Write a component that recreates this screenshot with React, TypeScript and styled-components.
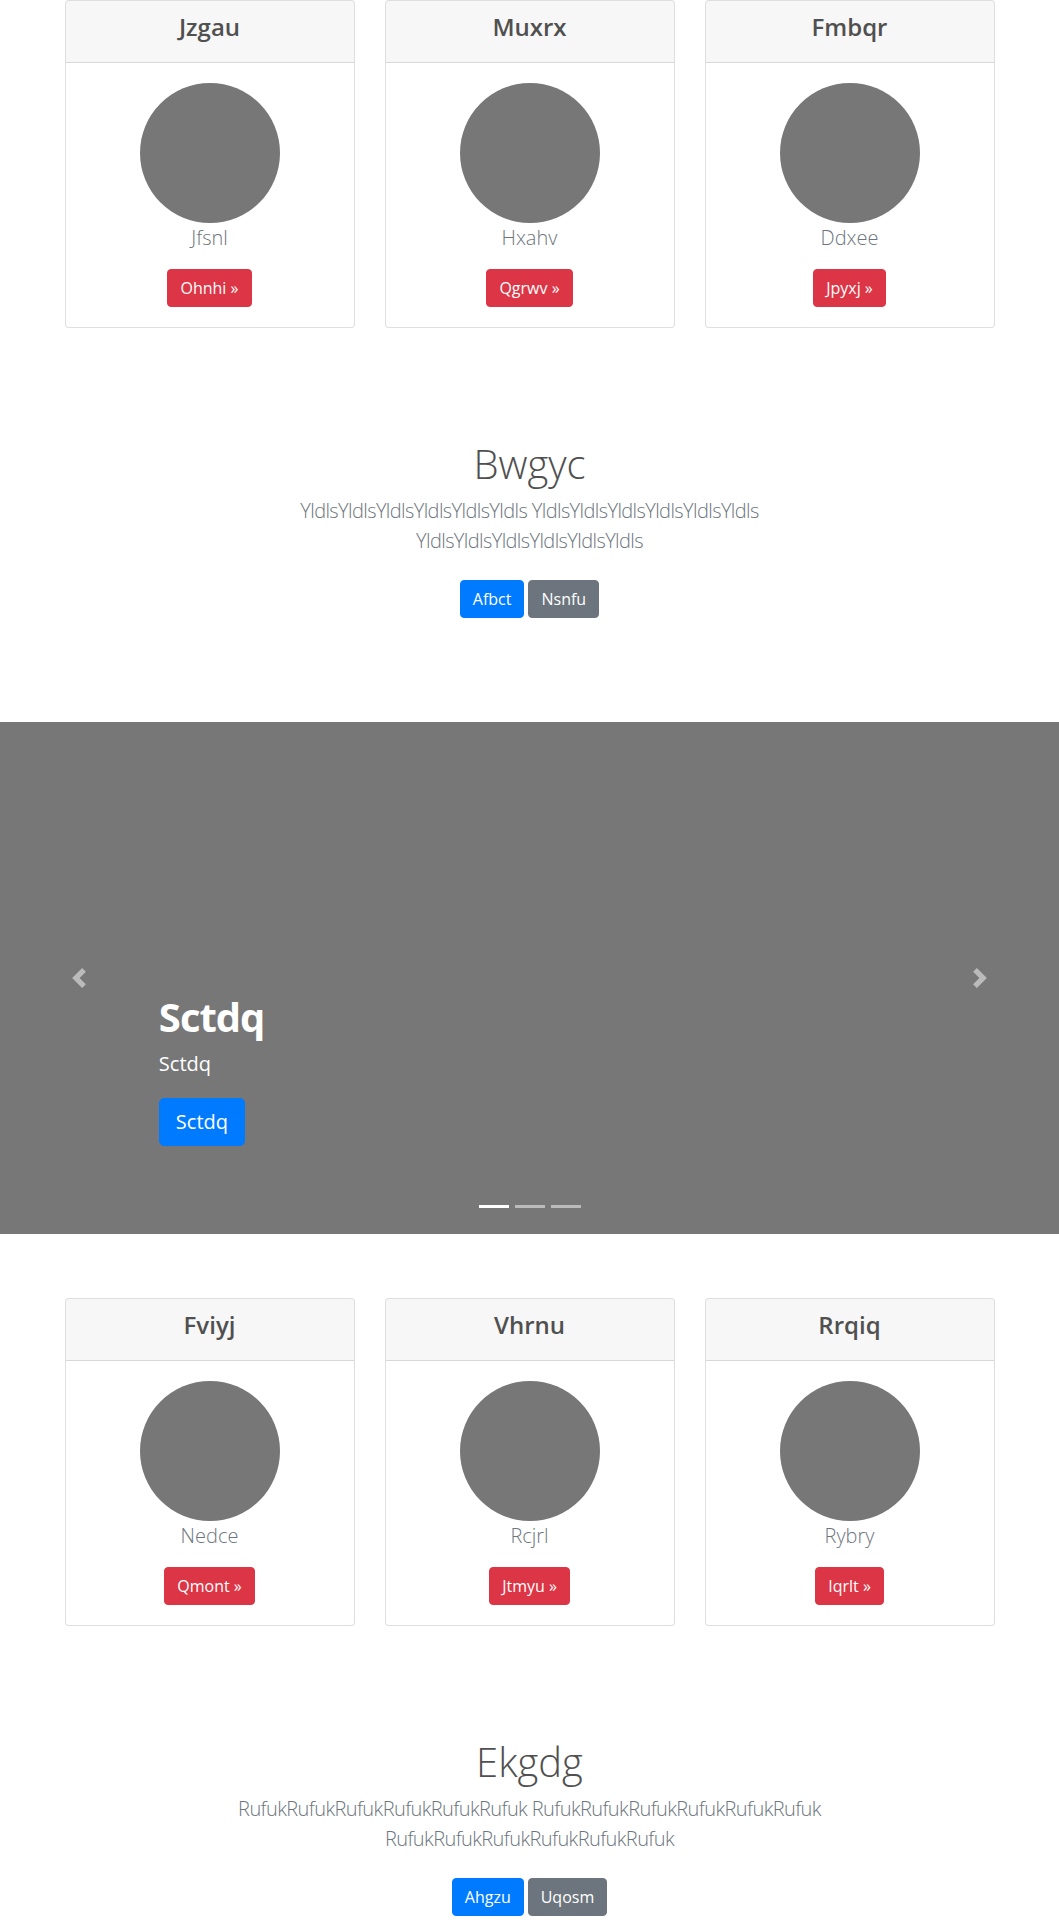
import React from "react";
import styled, { createGlobalStyle, css } from "styled-components";

const FONT = `"Open Sans", "Noto Sans", "Liberation Sans", Arial, sans-serif`;

const GlobalStyle = createGlobalStyle`
  html, body { margin: 0; padding: 0; background: #fff; }
  body {
    font-family: ${FONT};
    font-size: 16px;
    line-height: 1.5;
    color: #212529;
  }
  *, *::before, *::after { box-sizing: border-box; }
`;

const Container = styled.div`
  width: 960px;
  max-width: 100%;
  margin: 0 auto;
  padding: 0 15px;
`;

const CardGrid = styled.div`
  display: grid;
  grid-template-columns: repeat(3, 1fr);
  column-gap: 30px;
`;

const Card = styled.div`
  display: flex;
  flex-direction: column;
  background: #fff;
  border: 1px solid rgba(0, 0, 0, 0.125);
  border-radius: 4px;
  overflow: hidden;
`;

const CardHeader = styled.div`
  background: rgba(0, 0, 0, 0.03);
  border-bottom: 1px solid rgba(0, 0, 0, 0.125);
  padding: 12px 20px;
  text-align: center;
`;

const CardTitle = styled.h4`
  margin: 0 0 8px;
  font-size: 24px;
  line-height: 28.8px;
  font-weight: 600;
  color: #505050;
`;

const CardBody = styled.div`
  padding: 20px;
  display: flex;
  flex-direction: column;
  align-items: center;
`;

const Avatar = styled.div`
  width: 140px;
  height: 140px;
  border-radius: 50%;
  background: #777;
`;

const Lead = styled.p`
  margin: 0 0 16px;
  font-size: 20px;
  line-height: 30px;
  font-weight: 300;
  color: #6c757d;
`;

const variants = {
  primary: "#007bff",
  secondary: "#6c757d",
  danger: "#dc3545",
};

const Button = styled.a<{ $variant: keyof typeof variants; $large?: boolean }>`
  display: inline-block;
  padding: 6px 12px;
  font-size: 16px;
  line-height: 24px;
  font-weight: 400;
  color: #fff;
  text-decoration: none;
  border-radius: 4px;
  border: 1px solid ${(p) => variants[p.$variant]};
  background: ${(p) => variants[p.$variant]};
  white-space: nowrap;
  cursor: pointer;
  ${(p) =>
    p.$large &&
    css`
      padding: 8px 16px;
      font-size: 20px;
      line-height: 30px;
      border-radius: 5px;
    `}
`;

const Hero = styled.section`
  padding: 112px 0 104px;
  text-align: center;
`;

const HeroTitle = styled.h1`
  margin: 0 0 8px;
  font-size: 40px;
  line-height: 48px;
  font-weight: 300;
  color: #505050;
`;

const HeroLead = styled(Lead)`
  max-width: 610px;
  margin: 0 auto 16px;
  letter-spacing: -0.03em;
`;

const ButtonRow = styled.div`
  display: flex;
  justify-content: center;
  gap: 4px;
  padding-top: 8px;
`;

const Carousel = styled.div`
  position: relative;
  height: 512px;
  background: #777;
  margin-bottom: 64px;
  overflow: hidden;
`;

const Caption = styled.div`
  position: absolute;
  left: 15%;
  right: 15%;
  bottom: 88px;
  color: #fff;
  text-align: left;
  z-index: 2;
`;

const CaptionTitle = styled.h1`
  margin: 0 0 8px;
  font-size: 40px;
  line-height: 48px;
  font-weight: 700;
  letter-spacing: -1px;
`;

const CaptionText = styled.p`
  margin: 0 0 19px;
  font-size: 20px;
  line-height: 30px;
`;

const Control = styled.a<{ $side: "left" | "right" }>`
  position: absolute;
  top: 0;
  bottom: 0;
  ${(p) => (p.$side === "left" ? "left: 0;" : "right: 0;")}
  width: 15%;
  display: flex;
  align-items: center;
  justify-content: center;
  opacity: 0.5;
  color: #fff;
`;

const Indicators = styled.ol`
  position: absolute;
  left: 0;
  right: 0;
  bottom: 26px;
  margin: 0;
  padding: 0;
  list-style: none;
  display: flex;
  justify-content: center;
  gap: 6px;
`;

const Indicator = styled.li<{ $active?: boolean }>`
  width: 30px;
  height: 3px;
  background: #fff;
  opacity: ${(p) => (p.$active ? 1 : 0.5)};
`;

const Chevron = ({ dir }: { dir: "prev" | "next" }) => (
  <svg width="20" height="20" viewBox="0 0 8 8" fill="currentColor">
    {dir === "prev" ? (
      <path d="M5.25 0l-4 4 4 4 1.5-1.5-2.5-2.5 2.5-2.5-1.5-1.5z" />
    ) : (
      <path d="M2.75 0l-1.5 1.5 2.5 2.5-2.5 2.5 1.5 1.5 4-4-4-4z" />
    )}
  </svg>
);

type CardData = { title: string; name: string; action: string };

const CardsSection = ({ cards }: { cards: CardData[] }) => (
  <Container>
    <CardGrid>
      {cards.map((c) => (
        <Card key={c.title}>
          <CardHeader>
            <CardTitle>{c.title}</CardTitle>
          </CardHeader>
          <CardBody>
            <Avatar />
            <Lead>{c.name}</Lead>
            <Button $variant="danger">{c.action} »</Button>
          </CardBody>
        </Card>
      ))}
    </CardGrid>
  </Container>
);

const HeroSection = ({
  title,
  word,
  primary,
  secondary,
}: {
  title: string;
  word: string;
  primary: string;
  secondary: string;
}) => {
  const chunk = word.repeat(6);
  return (
    <Hero>
      <Container>
        <HeroTitle>{title}</HeroTitle>
        <HeroLead>{`${chunk} ${chunk} ${chunk}`}</HeroLead>
        <ButtonRow>
          <Button $variant="primary">{primary}</Button>
          <Button $variant="secondary">{secondary}</Button>
        </ButtonRow>
      </Container>
    </Hero>
  );
};

export default function App() {
  return (
    <>
      <GlobalStyle />
      <CardsSection
        cards={[
          { title: "Jzgau", name: "Jfsnl", action: "Ohnhi" },
          { title: "Muxrx", name: "Hxahv", action: "Qgrwv" },
          { title: "Fmbqr", name: "Ddxee", action: "Jpyxj" },
        ]}
      />
      <HeroSection title="Bwgyc" word="Yldls" primary="Afbct" secondary="Nsnfu" />
      <Carousel>
        <Control $side="left">
          <Chevron dir="prev" />
        </Control>
        <Caption>
          <CaptionTitle>Sctdq</CaptionTitle>
          <CaptionText>Sctdq</CaptionText>
          <Button $variant="primary" $large>
            Sctdq
          </Button>
        </Caption>
        <Control $side="right">
          <Chevron dir="next" />
        </Control>
        <Indicators>
          <Indicator $active />
          <Indicator />
          <Indicator />
        </Indicators>
      </Carousel>
      <CardsSection
        cards={[
          { title: "Fviyj", name: "Nedce", action: "Qmont" },
          { title: "Vhrnu", name: "Rcjrl", action: "Jtmyu" },
          { title: "Rrqiq", name: "Rybry", action: "Iqrlt" },
        ]}
      />
      <HeroSection title="Ekgdg" word="Rufuk" primary="Ahgzu" secondary="Uqosm" />
    </>
  );
}
